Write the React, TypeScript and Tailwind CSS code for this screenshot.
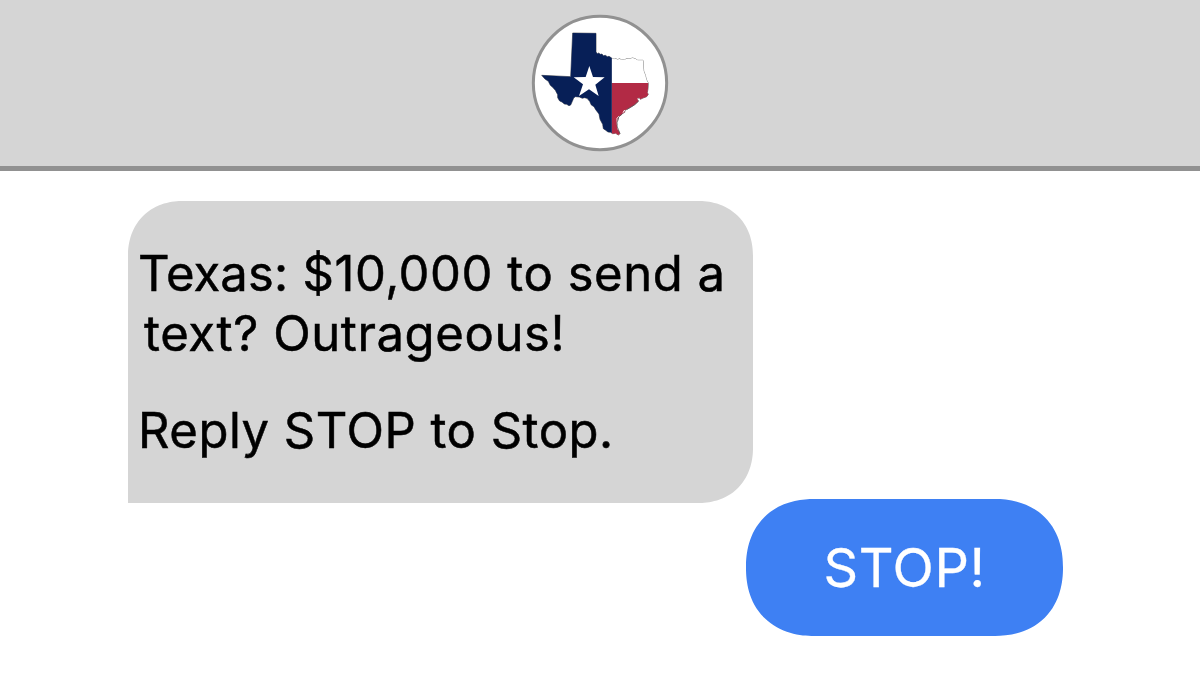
import React from 'react';

const TEXAS =
  'M143 75 L213 76 L213 132 L217 137 L221 135 L226 139 L231 138 L235 143 L241 142 L247 146 L252 145 L260 150 L267 154 L272 152 L278 155 L284 152 L289 156 L294 154 L299 156 L304 152 L312 153 L323 150 L332 153 L338 157 L354 157 L356 189 L361 202 L364 215 L370 226 L369 242 L367 254 L370 259 L365 266 L354 270 L346 274 L343 269 L339 270 L338 276 L341 279 L329 290 L317 298 L306 304 L300 307 L299 313 L292 317 L287 322 L281 326 L279 335 L276 344 L277 357 L280 367 L285 377 L280 381 L272 376 L263 377 L257 373 L249 372 L241 366 L235 362 L233 349 L225 334 L222 318 L212 305 L207 296 L199 291 L194 280 L186 271 L178 269 L172 271 L163 267 L151 266 L146 270 L142 280 L137 291 L132 293 L125 289 L118 288 L111 282 L104 279 L98 269 L98 260 L91 247 L83 238 L76 232 L70 220 L60 213 L50 202 L137 206 Z';

const TexasAvatar = () => (
  <svg width="150" height="150" viewBox="0 0 450 450" role="img">
    <defs>
      <clipPath id="texas">
        <path d={TEXAS} />
      </clipPath>
    </defs>
    <circle cx="225" cy="225" r="200" fill="#fff" stroke="#919191" strokeWidth="9" />
    <path d={TEXAS} fill="none" stroke="#666" strokeWidth="2.5" />
    <g clipPath="url(#texas)">
      <rect x="260" y="70" width="120" height="155" fill="#fff" />
      <rect x="260" y="225" width="120" height="165" fill="#b22a45" />
      <rect x="40" y="70" width="220.5" height="320" fill="#071f57" />
    </g>
    {/* coastline bays */}
    <path d="M338 272 L343 278 M299 306 L294 314 M283 324 L276 331 L277 350 L280 366" fill="none" stroke="#fff" strokeWidth="3" />
    <path d="M341 279 L329 290 L306 304 M292 318 L281 327 L276 344 L277 357 L285 377" fill="none" stroke="#555" strokeWidth="2" />
    <path d="M193 174 L204 207 L239 208 L211 230 L221 264 L192 244 L162 264 L174 229 L146 208 L182 207 Z" fill="#fff" />
  </svg>
);

const App = () => {
  return (
    <div className="flex h-[675px] w-[1200px] flex-col overflow-hidden bg-white font-['Inter',sans-serif]">
      <header className="flex h-[171px] shrink-0 items-center justify-center border-b-5 border-[#919191] bg-[#d5d5d5]">
        <TexasAvatar />
      </header>

      <main className="flex flex-col pt-[30px] pr-[137px] pl-32">
        <div className="h-[302px] w-[625px] rounded-[55px] rounded-bl-none bg-[#d5d5d5] pt-[43px] pl-[10px] text-[49px] leading-[60px] whitespace-nowrap text-black [-webkit-text-stroke:0.5px_#000] [corner-shape:superellipse(1.12)]">
          <p className="tracking-[0.55px]">
            <span className="tracking-[0.1px]">Texas:</span> $10,000 to send a
          </p>
          <p className="pl-[6px] tracking-[0.6px]">text? Outrageous!</p>
          <p className="mt-[37px] tracking-[0.5px]">Reply STOP to Stop.</p>
        </div>
        <div className="-mt-1 flex h-[137px] w-[317px] items-center justify-center self-end rounded-[68px] bg-[#3e80f3] text-[54px] tracking-[0.6px] text-white [-webkit-text-stroke:0.3px_#fff] [corner-shape:superellipse(1.15)]">
          STOP!
        </div>
      </main>
    </div>
  );
};

export default App;
